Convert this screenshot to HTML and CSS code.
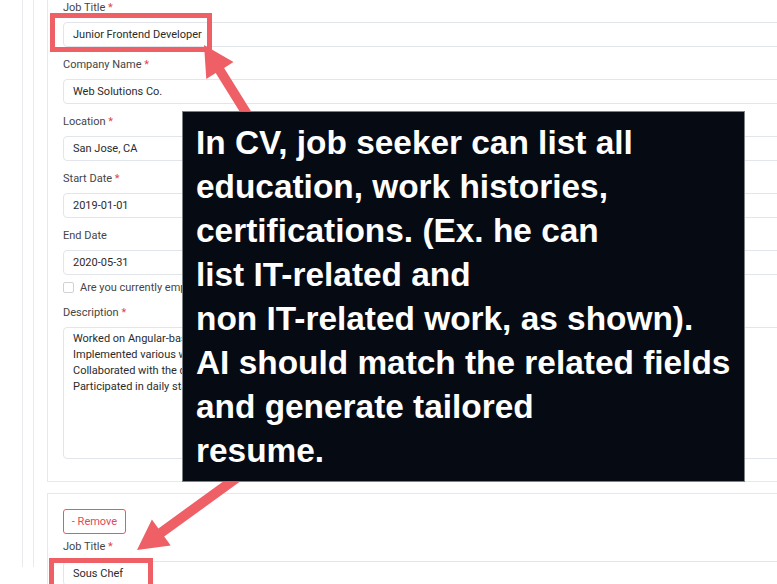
FILE: index.html
```html
<!DOCTYPE html>
<html lang="en">
<head>
<meta charset="utf-8">
<title>Work History</title>
<link rel="stylesheet" href="styles.css">
</head>
<body>
<div class="page">
  <div class="outer">
    <div class="inner">
      <div class="cards">
        <section class="card">
          <div class="field">
            <label class="label">Job Title <span class="req">*</span></label>
            <div class="input">Junior Frontend Developer</div>
          </div>
          <div class="field">
            <label class="label">Company Name <span class="req">*</span></label>
            <div class="input">Web Solutions Co.</div>
          </div>
          <div class="field">
            <label class="label">Location <span class="req">*</span></label>
            <div class="input">San Jose, CA</div>
          </div>
          <div class="field">
            <label class="label">Start Date <span class="req">*</span></label>
            <div class="input">2019-01-01</div>
          </div>
          <div class="field field-tight">
            <label class="label">End Date</label>
            <div class="input">2020-05-31</div>
          </div>
          <div class="check-row">
            <span class="checkbox"></span>
            <span class="check-label">Are you currently employed here?</span>
          </div>
          <div class="field field-last">
            <label class="label">Description <span class="req">*</span></label>
            <div class="textarea">Worked on Angular-based web applications for client projects.<br>Implemented various web features and reusable UI components.<br>Collaborated with the design team to build responsive layouts.<br>Participated in daily stand-up meetings and code reviews.</div>
          </div>
        </section>
        <section class="card">
          <button class="remove" type="button">- Remove</button>
          <div class="field">
            <label class="label">Job Title <span class="req">*</span></label>
            <div class="input">Sous Chef</div>
          </div>
        </section>
      </div>
    </div>
  </div>
</div>

<svg class="marks" width="777" height="584" viewBox="0 0 777 584" xmlns="http://www.w3.org/2000/svg">
  <rect x="52.5" y="15.5" width="157" height="34" fill="none" stroke="#ef5f66" stroke-width="5"/>
  <rect x="51.5" y="560.5" width="99" height="40" fill="none" stroke="#ef5f66" stroke-width="5"/>
  <polygon fill="#ef5f66" points="204,45 233.5,62 224.1,67.9 261.1,127.4 252.7,132.6 215.7,73.1 206.3,79"/>
  <polygon fill="#ef5f66" points="137,550 151.9,519.4 158.4,528.4 258.5,455.9 264.3,464.1 164.2,536.5 170.7,545.4"/>
</svg>

<div class="callout">In CV, job seeker can list all<br>education, work histories,<br>certifications. (Ex. he can<br>list IT-related and<br>non IT-related work, as shown).<br>AI should match the related fields<br>and generate tailored<br>resume.</div>
</body>
</html>
```
FILE: styles.css
```css
html, body {
  margin: 0;
  padding: 0;
  background: #ffffff;
}
body {
  width: 777px;
  height: 584px;
  overflow: hidden;
  position: relative;
  font-family: Roboto, "Liberation Sans", Arial, sans-serif;
  font-size: 11px;
  color: #333;
}
.page {
  padding-left: 22px;
  height: 584px;
}
.outer {
  border-left: 1px solid #e8eaed;
  padding-left: 10px;
  height: 100%;
}
.inner {
  border-left: 1px solid #e8eaed;
  padding-left: 13px;
  height: 100%;
}
.cards {
  display: flex;
  flex-direction: column;
  gap: 11px;
  margin-top: -17px;
  width: 740px;
  margin-right: -40px;
}
.card {
  border: 1px solid #e6e8eb;
  border-right: none;
  padding: 16px 0 22px 15px;
}
.card + .card {
  padding-top: 15px;
}
.field {
  margin-bottom: 10px;
}
.field-tight {
  margin-bottom: 6px;
}
.field-last {
  margin-bottom: 0;
}
.label {
  display: block;
  line-height: 16px;
  margin-bottom: 6px;
  color: #454545;
}
.req {
  color: #e0454f;
}
.input {
  box-sizing: border-box;
  height: 25px;
  line-height: 23px;
  border: 1px solid #e2e5e9;
  border-radius: 4px;
  padding: 0 9px;
  color: #2b2b2b;
  white-space: nowrap;
  overflow: hidden;
}
.check-row {
  display: flex;
  align-items: center;
  height: 12px;
  margin-bottom: 12px;
  color: #454545;
}
.checkbox {
  box-sizing: border-box;
  width: 11px;
  height: 11px;
  border: 1px solid #cfd3d8;
  border-radius: 2px;
  margin-right: 6px;
}
.textarea {
  box-sizing: border-box;
  height: 132px;
  border: 1px solid #e2e5e9;
  border-radius: 4px;
  padding: 3px 9px;
  line-height: 16px;
  color: #2b2b2b;
  white-space: nowrap;
  overflow: hidden;
}
.remove {
  display: block;
  box-sizing: border-box;
  height: 25px;
  width: 63px;
  padding: 0;
  margin-bottom: 5px;
  background: #fff;
  border: 1px solid #e45b68;
  border-radius: 3px;
  color: #e04b5a;
  font-family: Roboto, "Liberation Sans", Arial, sans-serif;
  font-size: 11px;
}
.marks {
  position: absolute;
  left: 0;
  top: 0;
  z-index: 1;
}
.callout {
  position: absolute;
  left: 182px;
  top: 111px;
  width: 563px;
  height: 371px;
  box-sizing: border-box;
  z-index: 2;
  background: #060a13;
  border: 1px solid #7d8085;
  padding: 9px 13px;
  color: #ffffff;
  font-family: "Liberation Sans", Arial, sans-serif;
  font-weight: bold;
  font-size: 33.4px;
  line-height: 44px;
  white-space: nowrap;
}
```
